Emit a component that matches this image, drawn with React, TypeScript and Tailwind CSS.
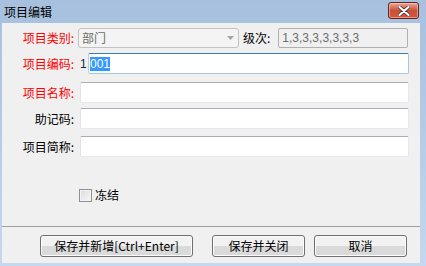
import clsx from 'clsx';

const cn = clsx;

const font = { fontFamily: '"Noto Sans CJK SC", "Liberation Sans", sans-serif' };

function Label({ text, red, className }: { text: string; red?: boolean; className?: string }) {
  return (
    <div className={cn('w-[72px] shrink-0 text-right text-[12px] leading-[20px]', red ? 'text-[#ff0000]' : 'text-black', className)}>
      {text}
    </div>
  );
}

function TextBox({ className, focused, children }: { className?: string; focused?: boolean; children?: React.ReactNode }) {
  return (
    <div
      className={cn(
        'h-[21px] border bg-white rounded-[2px] flex items-center px-[2px] text-[12px]',
        focused
          ? 'border-[#a4c9e3] border-t-[#3d7bad] border-l-[#b5cfe7]'
          : 'border-[#e3e9ef] border-t-[#abadb3] border-l-[#e2e3ea]',
        className
      )}
    >
      {children}
    </div>
  );
}

function Btn({ label, className }: { label: string; className?: string }) {
  return (
    <button
      className={cn(
        'h-[22px] rounded-[3px] border border-[#707070] text-[12px] text-black leading-none',
        'bg-gradient-to-b from-[#f2f2f2] from-50% to-[#dadada] to-50% shadow-[inset_0_0_0_1px_#fcfcfc]',
        className
      )}
    >
      {label}
    </button>
  );
}

export default function App() {
  return (
    <div className="w-[426px] h-[266px] bg-gradient-to-b from-[#a6c0de] to-[#c4d8ef] flex flex-col overflow-hidden" style={font}>
      {/* title bar */}
      <div className="h-[23px] shrink-0 flex items-center pl-[4px] pr-[7px] relative">
        <span className="text-[12px] text-black leading-none">项目编辑</span>
        <div className="ml-auto mt-[-2px] w-[31px] h-[17px] rounded-[3px] border border-[#5e2620] bg-gradient-to-b from-[#eaa899] via-[#c84f38] to-[#d8573c] shadow-[inset_0_0_0_1px_rgba(255,220,210,0.5)] flex items-center justify-center">
          <svg width="12" height="10" viewBox="0 0 12 10">
            <path d="M1.5 1 L10.5 9 M10.5 1 L1.5 9" stroke="#4a2a26" strokeWidth="3.6" strokeLinecap="round" />
            <path d="M1.5 1 L10.5 9 M10.5 1 L1.5 9" stroke="#ffffff" strokeWidth="2.2" strokeLinecap="round" />
          </svg>
        </div>
      </div>

      {/* body */}
      <div className="flex-1 ml-[2px] mr-[6px] mb-[3px] bg-[#f0f0f0] flex flex-col">
        {/* row 1 */}
        <div className="flex items-center mt-[5px] h-[20px]">
          <Label text="项目类别:" red />
          <div className="ml-[4px] w-[161px] h-[20px] rounded-[3px] border border-[#c3c3c3] bg-[#f4f4f4] flex items-center pl-[3px] pr-[4px] text-[12px] text-[#6d6d6d]">
            <span>部门</span>
            <svg className="ml-auto" width="7" height="4" viewBox="0 0 7 4">
              <path d="M0 0 H7 L3.5 4 Z" fill="#a5a5a5" />
            </svg>
          </div>
          <span className="ml-[4px] text-[12px] text-black">级次:</span>
          <div className="ml-[8px] w-[130px] h-[20px] border border-[#b0b0b0] rounded-[2px] bg-[#f0f0f0] flex items-center pl-[3px] text-[12px] text-[#6d6d6d]" style={{ fontFamily: '"Liberation Sans", sans-serif' }}>
            1,3,3,3,3,3,3,3
          </div>
        </div>

        {/* row 2 */}
        <div className="flex items-center mt-[5px] h-[21px]">
          <Label text="项目编码:" red />
          <span className="ml-[6px] w-[8px] text-[12px] text-[#1a2a40]" style={{ fontFamily: '"Liberation Sans", sans-serif' }}>1</span>
          <TextBox focused className="w-[321px] pl-[1px]">
            <span className="bg-[#3399ff] text-white leading-[14px]" style={{ fontFamily: '"Liberation Sans", sans-serif' }}>001</span>
          </TextBox>
        </div>

        {/* row 3 */}
        <div className="flex items-center mt-[8px] h-[21px]">
          <Label text="项目名称:" red />
          <TextBox className="ml-[6px] w-[329px]" />
        </div>

        {/* row 4 */}
        <div className="flex items-center mt-[5px] h-[21px]">
          <Label text="助记码:" />
          <TextBox className="ml-[6px] w-[329px]" />
        </div>

        {/* row 5 */}
        <div className="flex items-center mt-[7px] h-[21px]">
          <Label text="项目简称:" />
          <TextBox className="ml-[6px] w-[329px]" />
        </div>

        {/* checkbox */}
        <div className="flex items-center mt-[31px] ml-[77px] h-[14px]">
          <div className="w-[13px] h-[13px] border border-[#8e8f8f] bg-gradient-to-br from-[#dcdcdc] to-[#f7f7f7] shadow-[inset_0_0_0_1px_#f4f4f4]" />
          <span className="ml-[3px] text-[12px] text-black">冻结</span>
        </div>

        {/* separator */}
        <div className="mt-[24px] h-px bg-[#a0a0a0]" />

        {/* buttons */}
        <div className="flex items-center mt-[8px]">
          <Btn label="保存并新增[Ctrl+Enter]" className="ml-[38px] w-[153px]" />
          <Btn label="保存并关闭" className="ml-[19px] w-[93px]" />
          <Btn label="取消" className="ml-[9px] w-[93px]" />
        </div>
      </div>
    </div>
  );
}
